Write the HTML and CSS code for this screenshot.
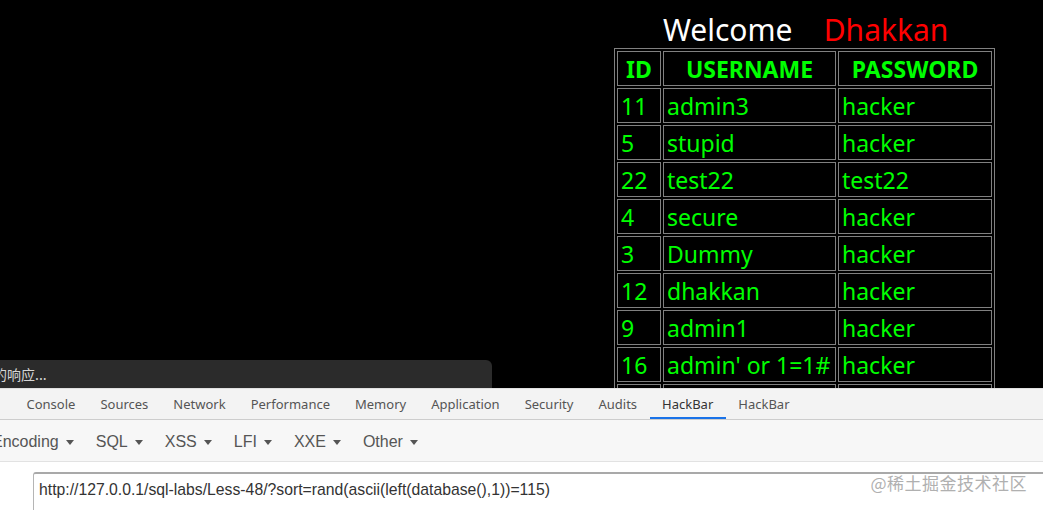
FILE: index.html
```html
<!DOCTYPE html>
<html lang="zh">
<head>
	<meta charset="utf-8">
	<title>Less-48</title>
	<link rel="stylesheet" href="styles.css">
</head>
<body>
	<div class="side">
		<div class="indhold">
			<div class="velkommen">Welcome&nbsp;&nbsp;&nbsp;&nbsp;<span class="navn">Dhakkan</span></div>
			<table class="brugere" border="1" cellspacing="2">
				<tr><th>ID</th><th>USERNAME</th><th>PASSWORD</th></tr>
				<tr><td>11</td><td>admin3</td><td>hacker</td></tr>
				<tr><td>5</td><td>stupid</td><td>hacker</td></tr>
				<tr><td>22</td><td>test22</td><td>test22</td></tr>
				<tr><td>4</td><td>secure</td><td>hacker</td></tr>
				<tr><td>3</td><td>Dummy</td><td>hacker</td></tr>
				<tr><td>12</td><td>dhakkan</td><td>hacker</td></tr>
				<tr><td>9</td><td>admin1</td><td>hacker</td></tr>
				<tr><td>16</td><td>admin' or 1=1#</td><td>hacker</td></tr>
				<!-- sidste raekke er skjult under devtools -->
				<tr><td>&nbsp;</td><td>&nbsp;</td><td>&nbsp;</td></tr>
			</table>
		</div>
		<div class="tip"><span>的响应...</span></div>
	</div>

	<div class="devtools">
		<div class="faner">
			<div class="fane">Console</div>
			<div class="fane">Sources</div>
			<div class="fane">Network</div>
			<div class="fane">Performance</div>
			<div class="fane">Memory</div>
			<div class="fane">Application</div>
			<div class="fane">Security</div>
			<div class="fane">Audits</div>
			<div class="fane aktiv">HackBar</div>
			<div class="fane">HackBar</div>
		</div>
		<div class="menu">
			<div class="punkt">Encoding <i class="pil"></i></div>
			<div class="punkt">SQL <i class="pil"></i></div>
			<div class="punkt">XSS <i class="pil"></i></div>
			<div class="punkt">LFI <i class="pil"></i></div>
			<div class="punkt">XXE <i class="pil"></i></div>
			<div class="punkt">Other <i class="pil"></i></div>
		</div>
		<div class="felt">
			<div class="url">http://127.0.0.1/sql-labs/Less-48/?sort=rand(ascii(left(database(),1))=115)</div>
		</div>
		<div class="vandmaerke">@稀土掘金技术社区</div>
	</div>
</body>
</html>
```
FILE: styles.css
```css
* {box-sizing: border-box;
}

body {
	margin: 0;
	background: #000;
	overflow: hidden;
}

/*		selve siden    */

.side {
	position: relative;
	height: 388px;
	overflow: hidden;
}

.indhold {
	padding: 11px 0 0 614px;
	font-family: "Noto Sans", "Open Sans", sans-serif;
}

.velkommen {
	color: #fff;
	font-size: 30px;
	line-height: 37px;
	padding-left: 49px;
}

.navn {
	color: #ff0000;
}

.brugere {
	border: 1px solid #808080;
	border-collapse: separate;
	border-spacing: 2px;
	color: #00ff00;
	font-size: 23px;
}

.brugere th,
.brugere td {
	border: 1px solid #808080;
	height: 35px;
	padding: 0 3px;
	line-height: 30px;
	white-space: nowrap;
}

.brugere th {
	font-weight: bold;
	padding: 0 8px;
}

.brugere td:first-child {
	width: 44px;
}

.brugere td:nth-child(2) {
	width: 173px;
}

.brugere td:nth-child(3) {
	width: 154px;
}

.tip {
	position: absolute;
	left: 0;
	bottom: 0;
	width: 492px;
	height: 28px;
	background: #2b2b2b;
	border-radius: 0 6px 0 0;
	color: #d6d6d6;
	font-family: "Noto Sans CJK SC", sans-serif;
	font-size: 14px;
	line-height: 28px;
	overflow: hidden;
}

.tip span {
	margin-left: -7px;
}

/*		devtools    */

.devtools {
	position: relative;
	height: 122px;
	background: #fff;
	font-family: "Noto Sans", "Open Sans", sans-serif;
}

.faner {
	display: flex;
	height: 32px;
	padding-left: 14px;
	background: #f3f3f3;
	border-top: 1px solid #e0e0e0;
	border-bottom: 1px solid #cdcdcd;
}

.fane {
	padding: 0 12.5px;
	font-size: 13px;
	line-height: 31px;
	color: #555;
}

.fane.aktiv {
	color: #333;
	border-bottom: 2px solid #1a73e8;
}

.menu {
	display: flex;
	height: 42px;
	background: #f7f7f7;
	border-bottom: 1px solid #e2e2e2;
	font-family: "Liberation Sans", Arial, sans-serif;
	font-size: 16px;
	color: #555;
	line-height: 40px;
	margin-left: -8px;
	padding-top: 2px;
}

.punkt {
	margin-right: 22px;
	display: flex;
	align-items: center;
}

.pil {
	display: inline-block;
	width: 0;
	height: 0;
	margin-left: 7px;
	margin-top: 2px;
	border-left: 4px solid transparent;
	border-right: 4px solid transparent;
	border-top: 5px solid #555;
}

.felt {
	padding: 10px 0 0 33px;
}

.url {
	height: 40px;
	border: 1px solid #b5b5b5;
	border-top: 2px solid #a9a9a9;
	border-right: none;
	border-radius: 3px 0 0 0;
	padding: 7px 0 0 5px;
	font-family: "Liberation Sans", Arial, sans-serif;
	font-size: 15.75px;
	color: #333;
	white-space: nowrap;
}

.vandmaerke {
	position: absolute;
	right: 16px;
	bottom: 15px;
	font-family: "Noto Sans CJK SC", sans-serif;
	font-size: 17px;
	color: #b0b0b0;
	letter-spacing: 0.5px;
}
```
